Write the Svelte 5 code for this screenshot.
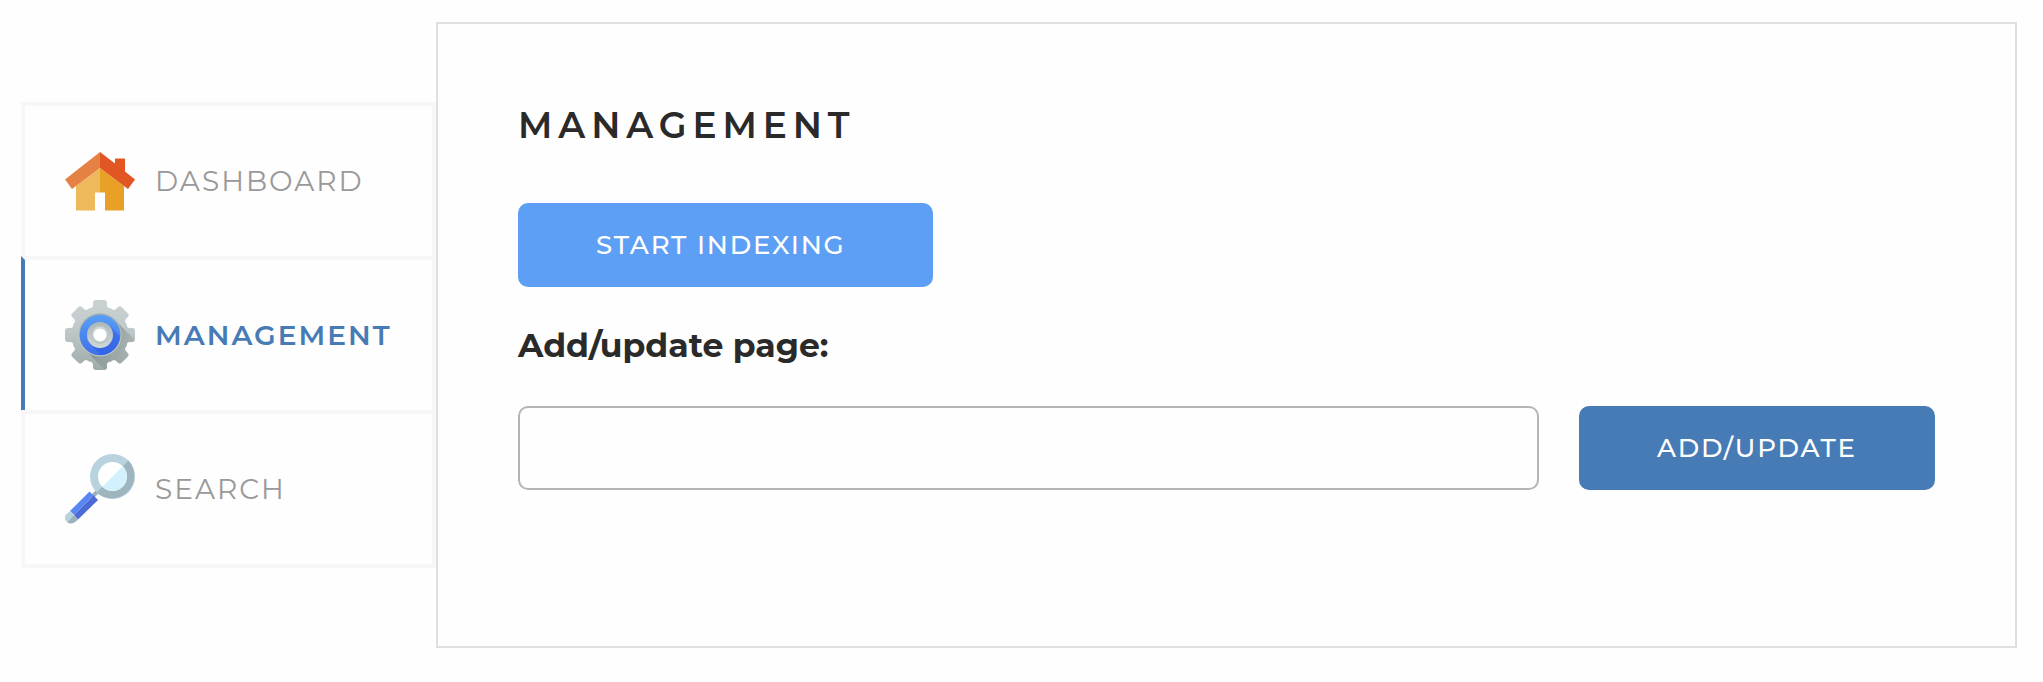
<script>
  const items = [
    { id: 'dashboard', label: 'Dashboard' },
    { id: 'management', label: 'Management' },
    { id: 'search', label: 'Search' }
  ];
  const teeth = [0, 45, 90, 135, 180, 225, 270, 315];
  let active = $state('management');
  let page = $state('');
</script>

<div class="layout">
  <nav class="tabs">
    {#each items as item}
      <button class="tab {item.id}" class:active={active === item.id} onclick={() => (active = item.id)}>
        {#if item.id === 'dashboard'}
          <svg class="icon" viewBox="0 0 70 70" aria-hidden="true">
            <path fill="#eeb95b" d="M11 34 35 16v24.500h-5V58.500H11z" />
            <path fill="#e8a026" d="M35 16l24 18v24.500H40V40.500h-5z" />
            <path fill="#e68144" d="M35 0v16L7 37 0 27.500z" />
            <path fill="#e15623" d="M35 0l15 11.500V6.500h10v13l10 8L63 37 35 16z" />
          </svg>
        {:else if item.id === 'management'}
          <svg class="icon" viewBox="0 0 70 70" aria-hidden="true">
            <defs>
              <linearGradient id="steel" x1="0" y1="0" x2="0" y2="1">
                <stop offset="0" stop-color="#c9d1d1" />
                <stop offset=".35" stop-color="#c3cccc" />
                <stop offset="1" stop-color="#9dabaa" />
              </linearGradient>
              <linearGradient id="blue" x1="0" y1="0" x2="0" y2="1">
                <stop offset="0" stop-color="#589ff6" />
                <stop offset="1" stop-color="#3f70ea" />
              </linearGradient>
              <linearGradient id="hub" x1="0" y1="0" x2="0" y2="1">
                <stop offset="0" stop-color="#adb7b7" />
                <stop offset="1" stop-color="#d1d8d8" />
              </linearGradient>
              <linearGradient id="shade" x1="35" y1="35" x2="60" y2="60" gradientUnits="userSpaceOnUse">
                <stop offset="0" stop-color="#5d6b6a" stop-opacity=".5" />
                <stop offset="1" stop-color="#5d6b6a" stop-opacity=".05" />
              </linearGradient>
              <clipPath id="gear">
                <circle cx="35" cy="35" r="28.500" />
                {#each teeth as angle}
                  <path
                    transform="rotate({angle} 35 35)"
                    d="M23.500 8.500Q28 9 28 5V3q0-3 3-3h8q3 0 3 3v2q0 4 4.500 3.500v5h-23z"
                  />
                {/each}
              </clipPath>
              <clipPath id="ring"><circle cx="35" cy="35" r="20" /></clipPath>
            </defs>
            <g clip-path="url(#gear)">
              <path fill="url(#steel)" d="M0 0h70v70H0z" />
              <path fill="url(#shade)" d="M50 20 80 50v30H50L20 50z" />
            </g>
            <circle cx="35" cy="35" r="21.500" fill="#c0c9c9" />
            <circle cx="35" cy="34.300" r="21" fill="#a3aeae" />
            <circle cx="35" cy="35" r="20.300" fill="url(#blue)" />
            <path fill="#234ee0" opacity=".4" clip-path="url(#ring)" d="m44.500 25.500 20 20v20H46L25.500 44.500z" />
            <circle cx="35" cy="35" r="13" fill="url(#hub)" />
            <circle cx="35" cy="35" r="9" fill="#bcc6c6" />
            <circle cx="35" cy="34" r="7.500" fill="#cfd6d6" />
            <circle cx="35" cy="35" r="6.500" fill="#fff" />
          </svg>
        {:else}
          <svg class="icon" viewBox="0 0 70 70" aria-hidden="true">
            <path stroke="#9bb2bb" stroke-width="4" d="m27 43 6-6" />
            <circle cx="47.500" cy="22.500" r="22.500" fill="#b9d3de" />
            <path fill="#9eb5c0" d="M63.400 6.600A22.500 22.500 0 0 1 31.600 38.400z" />
            <circle cx="47.500" cy="22.500" r="14.500" fill="#fff" />
            <path fill="#d2f1fd" d="M57.750 12.250A14.500 14.500 0 0 1 37.250 32.750z" />
            <path fill="#5b87f4" d="m24.500 37.500 4 4L9 61l-4-4z" />
            <path fill="#4c6ad6" d="m28.500 41.500 4.500 4.500-20 19.500L9 61z" />
            <path fill="#b9d3de" d="m5 57 4 4-7 7Q-1.500 65 .5 61z" />
            <path fill="#9bb2bb" d="m9 61 4 4.500Q7 72 2 68z" />
          </svg>
        {/if}
        <span class="label">{item.label}</span>
      </button>
    {/each}
  </nav>

  <main class="panel">
    <h1>Management</h1>
    <button class="btn start">Start indexing</button>
    <label for="page">Add/update page:</label>
    <div class="row">
      <input id="page" type="text" bind:value={page} />
      <button class="btn update">Add/update</button>
    </div>
  </main>
</div>

<style>
  :global(body) {
    margin: 0;
    background: #fefefe;
  }
  .layout, .layout * {
    box-sizing: border-box;
  }
  .layout {
    display: flex;
    align-items: flex-start;
    padding: 22px 26px 0 21px;
    font-family: Montserrat, Inter, sans-serif;
    color: #2a2a2a;
  }
  .tabs {
    width: 415px;
    margin-top: 80px;
    display: flex;
    flex-direction: column;
  }
  button, input {
    font-family: inherit;
    margin: 0;
  }
  .tab {
    height: 158px;
    display: flex;
    align-items: center;
    padding: 0 0 0 40px;
    background: none;
    border: 4px solid #f7f7f7;
    color: #999;
    font-size: 28px;
    font-weight: 400;
    text-transform: uppercase;
    text-align: left;
  }
  .tab + .tab {
    margin-top: -4px;
  }
  .tab.active {
    border-left-color: #467bb5;
    border-bottom: 0;
    height: 154px;
    color: #467bb5;
    font-weight: 600;
  }
  .tab.active + .tab {
    margin-top: 0;
  }
  .icon {
    width: 70px;
    height: 70px;
    flex: none;
    margin-right: 20px;
  }
  .dashboard .icon {
    position: relative;
    top: 6px;
  }
  .label {
    letter-spacing: 2px;
  }
  .panel {
    flex: 1;
    height: 626px;
    border: 2px solid #e0e0e0;
    padding: 78px 80px;
    display: flex;
    flex-direction: column;
    align-items: flex-start;
  }
  h1 {
    margin: 0;
    height: 101px;
    line-height: 46px;
    font-size: 36px;
    font-weight: 600;
    letter-spacing: 5.900px;
    text-transform: uppercase;
    white-space: nowrap;
  }
  .btn {
    height: 84px;
    padding: 0 0 0 78px;
    border: 0;
    border-radius: 10px;
    color: #fff;
    font-size: 26px;
    font-weight: 500;
    letter-spacing: 1.800px;
    text-align: left;
    text-transform: uppercase;
    white-space: nowrap;
  }
  .start {
    width: 415px;
    background: #5d9ff4;
  }
  label {
    height: 119px;
    padding-top: 37px;
    line-height: 42px;
    font-size: 33.100px;
    font-weight: 700;
  }
  .row {
    width: 100%;
    display: flex;
    gap: 40px;
  }
  input {
    flex: 1;
    min-width: 0;
    height: 84px;
    padding: 0 20px;
    font-size: 26px;
    border: 2px solid #b5b5b5;
    border-radius: 10px;
    background: none;
  }
  .update {
    width: 356px;
    background: #467bb5;
  }
</style>
